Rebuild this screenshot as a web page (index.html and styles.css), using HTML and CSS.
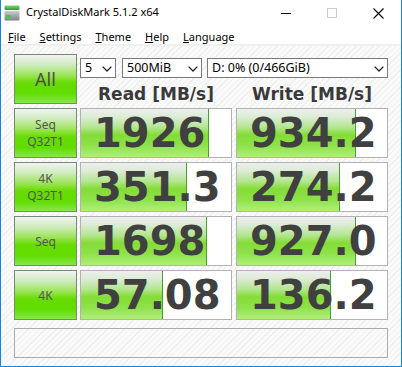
FILE: index.html
```html
<!DOCTYPE html>
<html lang="en">
<head>
    <meta charset="UTF-8">
    <title>CrystalDiskMark 5.1.2 x64</title>
    <link rel="stylesheet" href="styles.css">
</head>
<body>
    <div class="window">
        <div class="titlebar">
            <svg class="app-icon" width="16" height="16" viewBox="0 0 16 16">
                <defs>
                    <linearGradient id="icTop" x1="0" y1="0" x2="0" y2="1">
                        <stop offset="0" stop-color="#7fd36b"/>
                        <stop offset="1" stop-color="#2f9a3a"/>
                    </linearGradient>
                    <linearGradient id="icBody" x1="0" y1="0" x2="0" y2="1">
                        <stop offset="0" stop-color="#c9ccd0"/>
                        <stop offset="1" stop-color="#7d828a"/>
                    </linearGradient>
                </defs>
                <rect x="0.5" y="0.5" width="15" height="4.5" rx="1" fill="url(#icTop)"/>
                <rect x="0.5" y="6" width="15" height="9.5" rx="1" fill="url(#icBody)"/>
                <rect x="2" y="10" width="5" height="2.5" fill="#3fcf3a"/>
            </svg>
            <span class="title">CrystalDiskMark 5.1.2 x64</span>
            <div class="caption">
                <span class="cap-btn">
                    <svg width="10" height="10" viewBox="0 0 10 10"><path d="M0 5.5H10" stroke="#000" stroke-width="1"/></svg>
                </span>
                <span class="cap-btn">
                    <svg width="10" height="10" viewBox="0 0 10 10"><rect x="0.5" y="0.5" width="9" height="9" fill="none" stroke="#cccccc" stroke-width="1"/></svg>
                </span>
                <span class="cap-btn">
                    <svg width="11" height="11" viewBox="0 0 11 11"><path d="M0.5 0.5L10.5 10.5M10.5 0.5L0.5 10.5" stroke="#000" stroke-width="1.1"/></svg>
                </span>
            </div>
        </div>

        <div class="menubar">
            <span class="menu"><u>F</u>ile</span>
            <span class="menu"><u>S</u>ettings</span>
            <span class="menu"><u>T</u>heme</span>
            <span class="menu"><u>H</u>elp</span>
            <span class="menu"><u>L</u>anguage</span>
        </div>

        <div class="client">
            <div class="top">
                <div class="test-btn all">All</div>
                <div class="controls">
                    <div class="combos">
                        <div class="combo count"><span>5</span><svg width="10" height="6" viewBox="0 0 10 6"><path d="M0.6 0.6L5 5L9.4 0.6" fill="none" stroke="#222" stroke-width="1.3"/></svg></div>
                        <div class="combo size"><span>500MiB</span><svg width="10" height="6" viewBox="0 0 10 6"><path d="M0.6 0.6L5 5L9.4 0.6" fill="none" stroke="#222" stroke-width="1.3"/></svg></div>
                        <div class="combo drive"><span>D: 0% (0/466GiB)</span><svg width="10" height="6" viewBox="0 0 10 6"><path d="M0.6 0.6L5 5L9.4 0.6" fill="none" stroke="#222" stroke-width="1.3"/></svg></div>
                    </div>
                    <div class="headings">
                        <div class="heading">Read [MB/s]</div>
                        <div class="heading">Write [MB/s]</div>
                    </div>
                </div>
            </div>

            <div class="row">
                <div class="test-btn">Seq<br>Q32T1</div>
                <div class="value read" style="--fill: 85%">1926</div>
                <div class="value write" style="--fill: 79%">934.2</div>
            </div>
            <div class="row">
                <div class="test-btn">4K<br>Q32T1</div>
                <div class="value read" style="--fill: 70.5%">351.3</div>
                <div class="value write" style="--fill: 68.5%">274.2</div>
            </div>
            <div class="row">
                <div class="test-btn">Seq</div>
                <div class="value read" style="--fill: 84%">1698</div>
                <div class="value write" style="--fill: 79%">927.0</div>
            </div>
            <div class="row">
                <div class="test-btn">4K</div>
                <div class="value read" style="--fill: 54.5%">57.08</div>
                <div class="value write" style="--fill: 62.5%">136.2</div>
            </div>

            <div class="comment"></div>
        </div>
    </div>
</body>
</html>
```

FILE: styles.css
```css
html, body {
    margin: 0;
    padding: 0;
}
body {
    width: 402px;
    height: 367px;
    overflow: hidden;
    background: #fff;
    font-family: "Noto Sans", sans-serif;
}
.window {
    box-sizing: border-box;
    width: 402px;
    height: 367px;
    border: 1px solid #1883d7;
    border-top: none;
    display: flex;
    flex-direction: column;
    background: #fff;
}
.titlebar {
    height: 29px;
    display: flex;
    align-items: flex-start;
    flex-shrink: 0;
}
.app-icon {
    margin: 5px 0 0 3px;
}
.title {
    margin-left: 6px;
    padding-top: 4px;
    font-size: 11px;
    line-height: 15px;
    color: #000;
}
.caption {
    margin-left: auto;
    display: flex;
    height: 29px;
}
.cap-btn {
    width: 46px;
    height: 29px;
    display: flex;
    align-items: center;
    justify-content: center;
    padding-bottom: 3px;
    box-sizing: border-box;
}
.menubar {
    height: 15px;
    display: flex;
    flex-shrink: 0;
    font-size: 11px;
    line-height: 15px;
    color: #000;
}
.menu {
    padding: 0 7px;
}
.menu u {
    text-decoration-thickness: 1px;
    text-underline-offset: 1px;
}
.client {
    flex: 1;
    border-top: 2px solid #f0f0f0;
    padding: 8px 13px 0 13px;
    background-color: #fafafa;
    background-image: repeating-linear-gradient(135deg, #fafafa 0px, #fafafa 3px, #efefef 3px, #efefef 4px);
}
.top {
    display: flex;
    height: 50px;
}
.test-btn {
    box-sizing: border-box;
    width: 63px;
    height: 50px;
    flex-shrink: 0;
    border: 1px solid #748c74;
    background: linear-gradient(to bottom, #f2f4f2 0%, #d0ecc0 20%, #9ee45a 42%, #66dc00 58%, #62dc00 80%, #86e84a 100%);
    display: flex;
    align-items: center;
    justify-content: center;
    text-align: center;
    color: #555;
    font-size: 12px;
    line-height: 17px;
}
.test-btn.all {
    font-size: 18px;
    color: #4e4e4e;
}
.controls {
    margin-left: 3px;
    width: 308px;
    display: flex;
    flex-direction: column;
    padding-top: 4px;
}
.combos {
    display: flex;
    height: 20px;
}
.combo {
    box-sizing: border-box;
    height: 20px;
    border: 1px solid #7a7a7a;
    background: #fff;
    display: flex;
    align-items: center;
    justify-content: space-between;
    padding: 0 3px 0 4px;
    font-size: 12.5px;
    line-height: 18px;
    color: #000;
}
.combo svg {
    margin-top: 1px;
}
.combo.count {
    width: 36px;
}
.combo.size {
    width: 80px;
    margin-left: 6px;
}
.combo.drive {
    width: 181px;
    margin-left: 5px;
}
.headings {
    display: flex;
    height: 26px;
    box-sizing: border-box;
    padding-top: 6px;
}
.heading {
    width: 152px;
    text-align: center;
    font-family: "DejaVu Sans", sans-serif;
    font-weight: bold;
    font-size: 17px;
    line-height: 20px;
    color: #3a3a3a;
    white-space: nowrap;
}
.heading + .heading {
    margin-left: 4px;
}
.row {
    display: flex;
    height: 50px;
    margin-top: 4px;
}
.value {
    box-sizing: border-box;
    width: 152px;
    height: 50px;
    margin-left: 3px;
    border: 1px solid #b2b2b2;
    background-color: #fff;
    background-image:
        linear-gradient(#4a9e2c, #4a9e2c),
        linear-gradient(to bottom, #eeeeee 0%, #dcecd6 16%, #b4e690 38%, #84dc36 54%, #8ee24a 76%, #b0ef7a 100%);
    background-size: 1px 100%, var(--fill) 100%;
    background-position: var(--fill) 0, 0 0;
    background-repeat: no-repeat;
    padding-left: 13px;
    font-family: "DejaVu Sans", sans-serif;
    font-weight: bold;
    font-size: 40px;
    line-height: 48px;
    color: #404040;
    white-space: nowrap;
}
.value.write {
    margin-left: 4px;
}
.comment {
    box-sizing: border-box;
    width: 374px;
    height: 30px;
    margin-top: 8px;
    border: 1px solid #acacac;
}
```
